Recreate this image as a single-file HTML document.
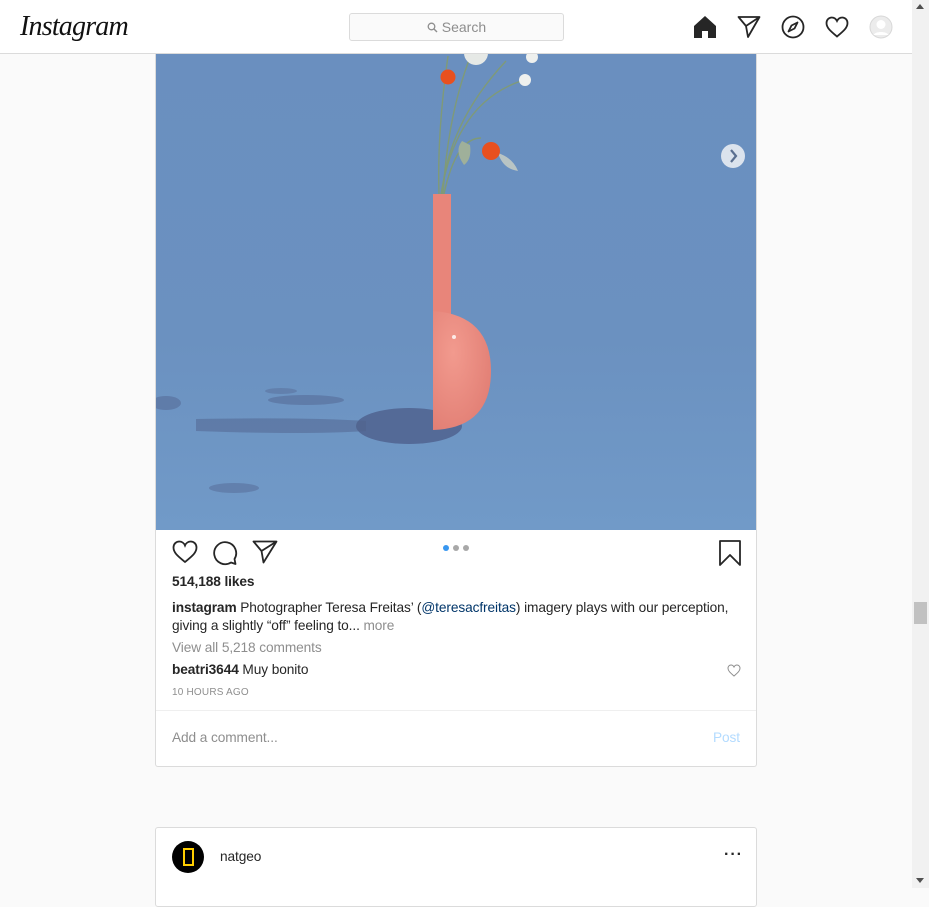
<!DOCTYPE html>
<html><head><meta charset="utf-8"><style>
*{margin:0;padding:0;box-sizing:border-box}
body{width:929px;height:888px;overflow:hidden;background:#fafafa;font-family:"Liberation Sans","DejaVu Sans",sans-serif;color:#262626;position:relative}
.hdr{position:absolute;left:0;top:0;width:912px;height:54px;background:#fff;border-bottom:1px solid #dbdbdb;z-index:5}
.logo{position:absolute;left:20px;top:11px;font-family:"Liberation Serif",serif;font-style:italic;font-size:28px;letter-spacing:-0.8px;color:#111}
.search{position:absolute;left:349px;top:13px;width:215px;height:28px;background:#fafafa;border:1px solid #dbdbdb;border-radius:3px;font-size:14px;color:#8e8e8e;text-align:center;line-height:26px}
.sb{position:absolute;left:912px;top:0;width:17px;height:888px;background:#f1f1f1}
.thumb{position:absolute;left:914px;top:602px;width:13px;height:22px;background:#c1c1c1}
.card{position:absolute;left:155px;width:602px;background:#fff;border:1px solid #dbdbdb;border-radius:3px}
.t{position:absolute;font-size:13.7px;white-space:nowrap;letter-spacing:-0.1px}
b{font-weight:bold}
</style></head><body>
<div class="hdr">
 <div class="logo">Instagram</div>
 <div class="search"><svg width="11" height="11" viewBox="0 0 11 11" style="vertical-align:-1px"><circle cx="4.5" cy="4.5" r="3.3" fill="none" stroke="#8e8e8e" stroke-width="1.3"/><path d="M7 7l3 3" stroke="#8e8e8e" stroke-width="1.4"/></svg> Search</div>
 <svg style="position:absolute;left:693px;top:15px" width="24" height="24" viewBox="0 0 24 24"><path d="M12 1L1 11v12h8v-7h6v7h8V11z" fill="#262626"/></svg>
 <svg style="position:absolute;left:737px;top:15px" width="24" height="24" viewBox="0 0 24 24"><path d="M1.5 2h21L11 22 9 11z M9 11L22.5 2" fill="none" stroke="#262626" stroke-width="1.8" stroke-linejoin="round"/></svg>
 <svg style="position:absolute;left:781px;top:15px" width="24" height="24" viewBox="0 0 24 24"><circle cx="12" cy="12" r="10.5" fill="none" stroke="#262626" stroke-width="1.8"/><path d="M16.5 7.5l-3 6-6 3 3-6z" fill="none" stroke="#262626" stroke-width="1.8" stroke-linejoin="round"/></svg>
 <svg style="position:absolute;left:825px;top:16px" width="24" height="22" viewBox="0 0 24 22"><path d="M12 20.5C6 15.5 1.5 12 1.5 7 1.5 3.8 4 1.5 6.8 1.5 9 1.5 11 3 12 5 13 3 15 1.5 17.2 1.5 20 1.5 22.5 3.8 22.5 7 22.5 12 18 15.5 12 20.5z" fill="none" stroke="#262626" stroke-width="1.8"/></svg>
 <svg style="position:absolute;left:869px;top:15px" width="24" height="24" viewBox="0 0 24 24"><circle cx="12" cy="12" r="11" fill="#ececec" stroke="#d8d8d8"/><circle cx="12" cy="9.5" r="4.5" fill="#fff"/><path d="M4.5 20c2-4 13-4 15 0" fill="#fff"/></svg>
</div>

<div class="card" style="top:40px;height:727px;border-top:none">
 <svg style="position:absolute;left:0;top:13px" width="600" height="477" viewBox="0 0 600 477">
  <defs><linearGradient id="bg" x1="0" y1="0" x2="0" y2="1"><stop offset="0" stop-color="#6a8fbf"/><stop offset=".6" stop-color="#6b91c0"/><stop offset="1" stop-color="#719ac8"/></linearGradient>
  <radialGradient id="vb" cx=".35" cy=".35" r=".8"><stop offset="0" stop-color="#f29a8e"/><stop offset="1" stop-color="#e07c72"/></radialGradient></defs>
  <rect width="600" height="477" fill="url(#bg)"/>
  <ellipse cx="253" cy="373" rx="53" ry="18" fill="#4e5f8c" opacity=".8"/>
  <path d="M40 366 Q150 364 210 368 L210 378 Q150 382 40 378z" fill="#50618c" opacity=".5"/>
  <ellipse cx="150" cy="347" rx="38" ry="5" fill="#52648f" opacity=".5"/>
  <ellipse cx="125" cy="338" rx="16" ry="3" fill="#52648f" opacity=".4"/>
  <ellipse cx="10" cy="350" rx="15" ry="7" fill="#52648f" opacity=".5"/>
  <ellipse cx="78" cy="435" rx="25" ry="5" fill="#52648f" opacity=".45"/>
  <g stroke="#7f9a78" stroke-width="1.4" fill="none">
   <path d="M283 141 Q281 80 292 3"/><path d="M286 141 Q292 70 350 8"/><path d="M288 141 Q300 85 325 85"/><path d="M285 141 Q300 50 365 28"/><path d="M287 141 Q292 60 315 2"/>
  </g>
  <path d="M306 88 q-8 10 2 24 q8-6 6-20z" fill="#9fb09a"/>
  <path d="M342 100 q15 5 20 18 q-15-2-20-18z" fill="#b8c4c4"/>
  <circle cx="292" cy="24" r="7.5" fill="#e8501f"/><circle cx="335" cy="98" r="9" fill="#e8501f"/>
  <circle cx="369" cy="27" r="6" fill="#eef0ee"/><circle cx="320" cy="0" r="12" fill="#e6e9e6"/><circle cx="376" cy="4" r="6" fill="#eef0ee"/>
  <rect x="277" y="141" width="18" height="122" fill="#e8857a"/>
  <path d="M277 258 Q335 262 335 318 Q335 375 277 377z" fill="url(#vb)"/>
  <circle cx="298" cy="284" r="2" fill="#fff" opacity=".8"/>
  <circle cx="577" cy="103" r="12" fill="#e8ecf2" opacity=".9"/>
  <path d="M575 97l5 6-5 6" stroke="#5a6f90" stroke-width="2.2" fill="none"/>
 </svg>
 <svg style="position:absolute;left:16px;top:500px" width="26" height="24" viewBox="0 0 26 24"><path d="M13 22C6.5 16.5 1.5 13 1.5 7.5 1.5 4 4 1.5 7.3 1.5 9.7 1.5 12 3 13 5.5 14 3 16.3 1.5 18.7 1.5 22 1.5 24.5 4 24.5 7.5 24.5 13 19.5 16.5 13 22z" fill="none" stroke="#262626" stroke-width="1.8"/></svg>
 <svg style="position:absolute;left:56px;top:500px" width="26" height="26" viewBox="0 0 26 26"><path d="M22.5 19A11 11 0 1 0 19 22.5L23.5 24z" fill="none" stroke="#262626" stroke-width="1.8" stroke-linejoin="round"/></svg>
 <svg style="position:absolute;left:96px;top:500px" width="26" height="24" viewBox="0 0 26 24"><path d="M1.5 1.5h23L11.5 22.5 9.5 11z M9.5 11L24.5 1.5" fill="none" stroke="#262626" stroke-width="1.8" stroke-linejoin="round"/></svg>
 <div style="position:absolute;left:287px;top:505px;width:6px;height:6px;border-radius:3px;background:#3897f0"></div>
 <div style="position:absolute;left:297px;top:505px;width:6px;height:6px;border-radius:3px;background:#a8a8a8"></div>
 <div style="position:absolute;left:307px;top:505px;width:6px;height:6px;border-radius:3px;background:#a8a8a8"></div>
 <svg style="position:absolute;left:563px;top:500px" width="22" height="26" viewBox="0 0 22 26"><path d="M1 1h20v24L11 15 1 25z" fill="none" stroke="#262626" stroke-width="1.8" stroke-linejoin="round"/></svg>
 <div class="t" style="left:16px;top:534px"><b>514,188 likes</b></div>
 <div class="t" style="left:16px;top:560px"><b>instagram</b> Photographer Teresa Freitas’ (<span style="color:#003569">@teresacfreitas</span>) imagery plays with our perception,</div>
 <div class="t" style="left:16px;top:578px">giving a slightly “off” feeling to... <span style="color:#8e8e8e">more</span></div>
 <div class="t" style="left:16px;top:600px;color:#8e8e8e">View all 5,218 comments</div>
 <div class="t" style="left:16px;top:622px"><b>beatri3644</b> Muy bonito</div>
 <svg style="position:absolute;left:571px;top:624px" width="14" height="13" viewBox="0 0 14 13"><path d="M7 12C3.5 9 1 7 1 4.2 1 2.4 2.3 1 4 1 5.3 1 6.4 1.8 7 3 7.6 1.8 8.7 1 10 1 11.7 1 13 2.4 13 4.2 13 7 10.5 9 7 12z" fill="none" stroke="#8e8e8e" stroke-width="1"/></svg>
 <div class="t" style="left:16px;top:647px;font-size:10px;color:#8e8e8e;letter-spacing:.2px">10 HOURS AGO</div>
 <div style="position:absolute;left:0;top:670px;width:600px;border-top:1px solid #efefef"></div>
 <div class="t" style="left:16px;top:690px;color:#8e8e8e">Add a comment...</div>
 <div class="t" style="left:557px;top:690px;color:#b3dbff">Post</div>
</div>

<div class="card" style="top:827px;height:80px">
 <div style="position:absolute;left:16px;top:13px;width:32px;height:32px;border-radius:16px;background:#000"></div>
 <div style="position:absolute;left:27px;top:20px;width:11px;height:18px;border:2px solid #ffce00"></div>
 <div class="t" style="left:64px;top:21px">natgeo</div>
 <div class="t" style="left:568px;top:18px;font-size:16px;font-weight:bold;letter-spacing:1px">···</div>
</div>

<div class="sb"></div>
<div class="thumb"></div>
<div style="position:absolute;left:916px;top:4px;width:0;height:0;border-left:4px solid transparent;border-right:4px solid transparent;border-bottom:5px solid #505050"></div>
<div style="position:absolute;left:916px;top:878px;width:0;height:0;border-left:4px solid transparent;border-right:4px solid transparent;border-top:5px solid #505050"></div>
</body></html>
